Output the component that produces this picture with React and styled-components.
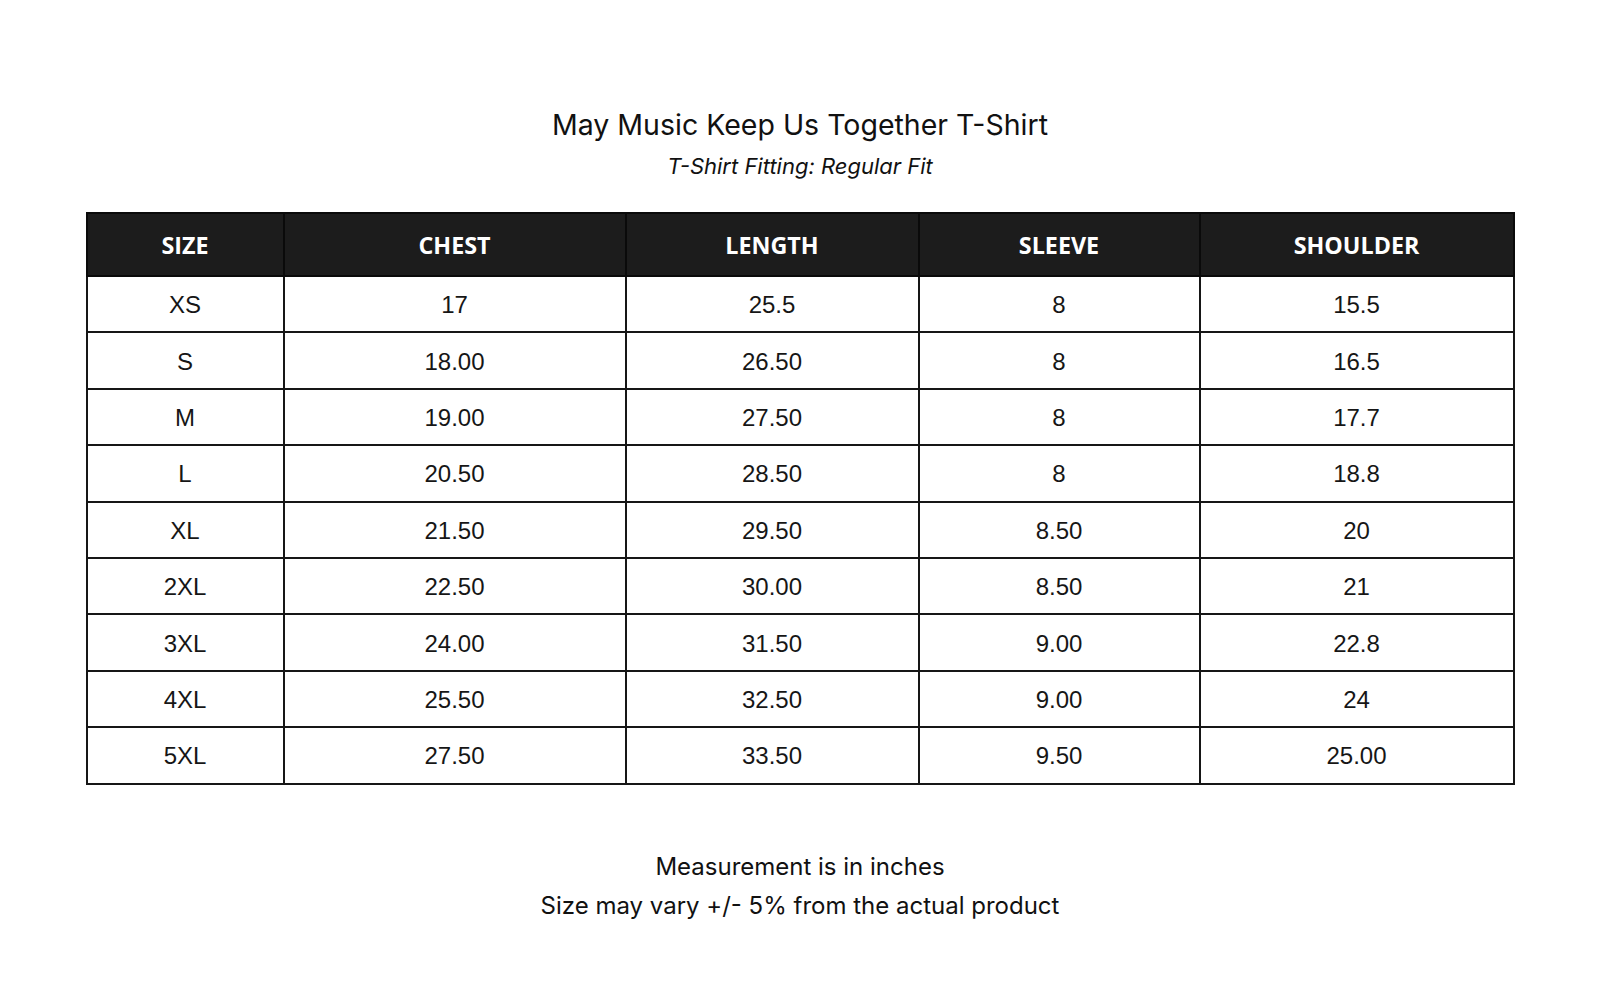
import React from 'react';
import styled, { createGlobalStyle } from 'styled-components';

const columns = [
    { key: 'size', title: 'SIZE', width: 197 },
    { key: 'chest', title: 'CHEST', width: 342 },
    { key: 'length', title: 'LENGTH', width: 293 },
    { key: 'sleeve', title: 'SLEEVE', width: 281 },
    { key: 'shoulder', title: 'SHOULDER', width: 314 },
];

const rows = [
    ['XS', '17', '25.5', '8', '15.5'],
    ['S', '18.00', '26.50', '8', '16.5'],
    ['M', '19.00', '27.50', '8', '17.7'],
    ['L', '20.50', '28.50', '8', '18.8'],
    ['XL', '21.50', '29.50', '8.50', '20'],
    ['2XL', '22.50', '30.00', '8.50', '21'],
    ['3XL', '24.00', '31.50', '9.00', '22.8'],
    ['4XL', '25.50', '32.50', '9.00', '24'],
    ['5XL', '27.50', '33.50', '9.50', '25.00'],
];

const GlobalStyle = createGlobalStyle`
    html, body {
        margin: 0;
        padding: 0;
        background: #ffffff;
    }
    body {
        font-family: Inter, "Open Sans", sans-serif;
        color: #111111;
    }
`;

function SizeChart() {
    return (
        <Styled.Page>
            <GlobalStyle />
            <Styled.Heading>
                <Styled.Title>May Music Keep Us Together T-Shirt</Styled.Title>
                <Styled.Subtitle>T-Shirt Fitting: Regular Fit</Styled.Subtitle>
            </Styled.Heading>
            <Styled.Table>
                <colgroup>
                    {columns.map(c => <col key={c.key} style={{ width: c.width }} />)}
                </colgroup>
                <thead>
                    <tr>
                        {columns.map(c => <Styled.Th key={c.key}>{c.title}</Styled.Th>)}
                    </tr>
                </thead>
                <tbody>
                    {rows.map(r => (
                        <tr key={r[0]}>
                            {r.map((v, i) => <Styled.Td key={i}>{v}</Styled.Td>)}
                        </tr>
                    ))}
                </tbody>
            </Styled.Table>
            <Styled.Notes>
                <Styled.Note>Measurement is in inches</Styled.Note>
                <Styled.Note>Size may vary +/- 5% from the actual product</Styled.Note>
            </Styled.Notes>
        </Styled.Page>
    );
}

const Styled = {
    Page: styled.div`
        width: 1600px;
        height: 1000px;
        display: flex;
        flex-direction: column;
        align-items: center;
        padding-top: 106px;
        box-sizing: border-box;
        background: #ffffff;
    `,
    Heading: styled.div`
        display: flex;
        flex-direction: column;
        align-items: center;
        gap: 9px;
        margin-bottom: 33px;
    `,
    Title: styled.h1`
        margin: 0;
        font-family: Inter, "Open Sans", sans-serif;
        font-weight: 400;
        font-size: 28.5px;
        line-height: 38px;
        color: #111111;
    `,
    Subtitle: styled.div`
        font-family: Inter, "Open Sans", sans-serif;
        font-style: italic;
        font-size: 22px;
        line-height: 26px;
        color: #111111;
    `,
    Table: styled.table`
        width: 1427px;
        table-layout: fixed;
        border-collapse: collapse;
        border: 2px solid #161616;
    `,
    Th: styled.th`
        height: 61px;
        padding: 0;
        background: #1c1c1c;
        border: 2px solid #0a0a0a;
        color: #ffffff;
        font-family: "Open Sans", Inter, sans-serif;
        font-weight: 700;
        font-size: 23.3px;
        text-align: center;
        vertical-align: middle;
    `,
    Td: styled.td`
        height: 56.4px;
        padding: 2px 0 0;
        border: 2px solid #161616;
        font-family: "Liberation Sans", Arial, sans-serif;
        font-size: 24px;
        color: #161616;
        text-align: center;
        vertical-align: middle;
        box-sizing: border-box;
    `,
    Notes: styled.div`
        margin-top: 62px;
        display: flex;
        flex-direction: column;
        align-items: center;
    `,
    Note: styled.div`
        font-family: Inter, "Open Sans", sans-serif;
        font-size: 24px;
        line-height: 39px;
        color: #111111;
    `,
};

export default function App() {
    return <SizeChart />;
}
